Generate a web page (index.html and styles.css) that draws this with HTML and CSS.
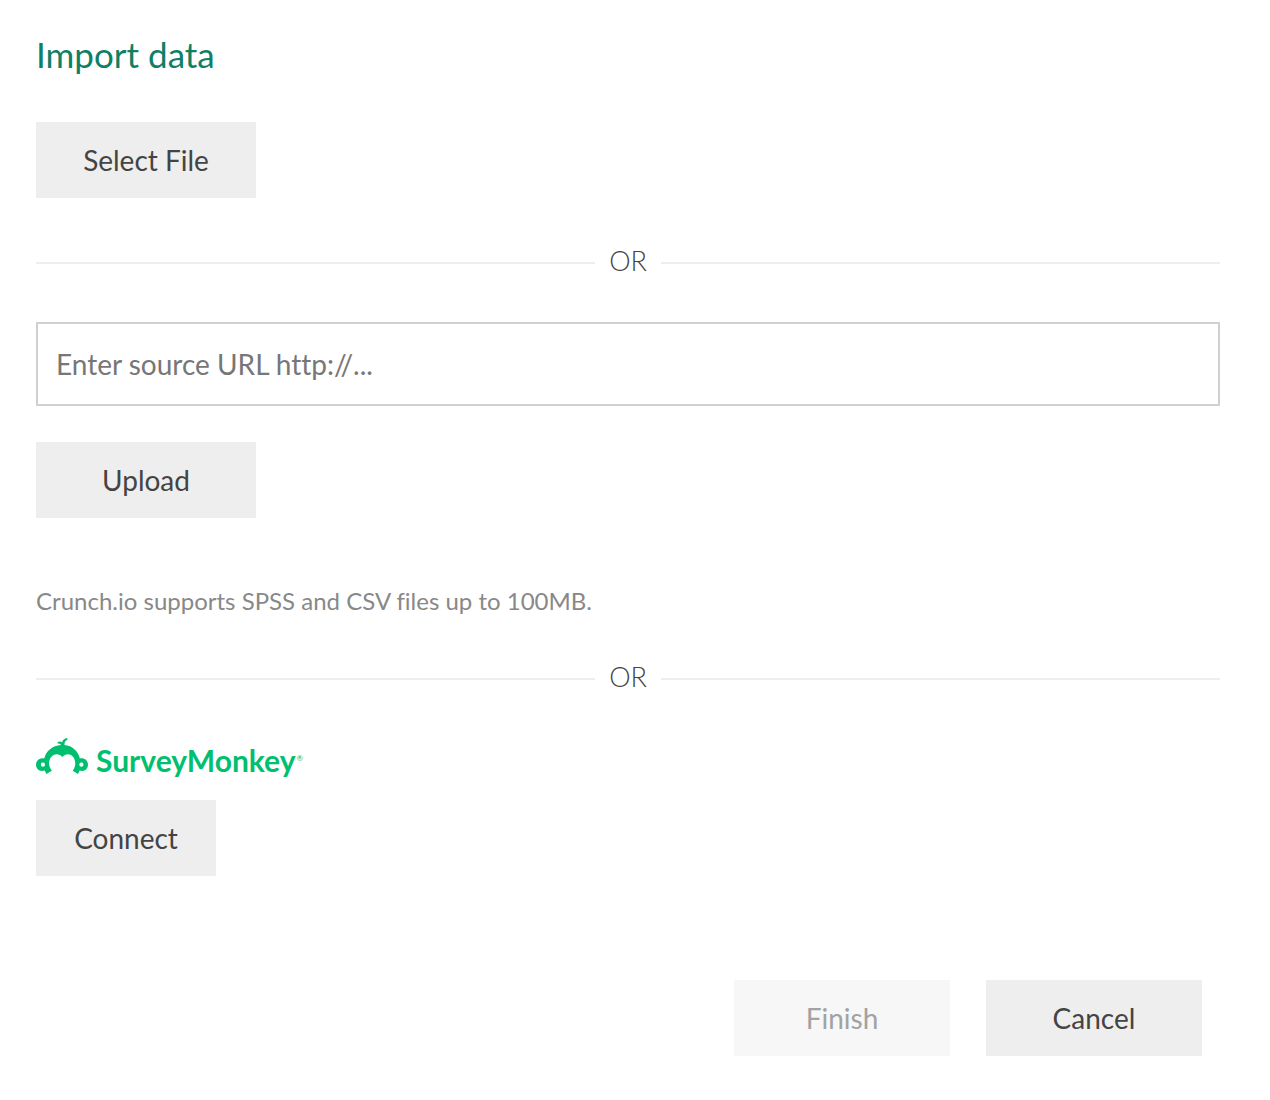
FILE: index.html
```html
<!DOCTYPE html>
<html lang="en">
<head>
<meta charset="utf-8">
<title>Import data</title>
<link rel="stylesheet" href="styles.css">
</head>
<body>
<main class="import">
  <h1 class="title">Import data</h1>
  <button class="button" type="button">Select File</button>
  <div class="divider">OR</div>
  <form class="url-form">
    <input class="url-input" type="text" aria-label="Source URL" placeholder="Enter source URL http://...">
    <button class="button" type="button">Upload</button>
  </form>
  <p class="hint">Crunch.io supports SPSS and CSV files up to 100MB.</p>
  <div class="divider">OR</div>
  <section class="service">
    <div class="brand">
      <svg class="brand-mark" viewBox="0 0 52 38" aria-hidden="true">
        <path fill="currentColor" fill-rule="evenodd" d="M25 7C24.500 5.800 23 5.400 21.200 5.300C21.400 3.500 24.600 2.600 26 4.600C26.500 2.200 28.500 .5 31 .1L31.700 1.500C29.200 2.600 28.400 4.400 28.500 7C36 7.700 42.200 13 43.900 20.500C48.600 19.600 52 22.700 52 26.800C52 31.300 48.200 34 43.600 32.500C43.200 33.600 42.700 34.500 42 35.900L36.700 32.800C38.800 29.800 39.400 27.400 39.200 24.500C38.600 16.300 31 13.600 26.300 18.900C21.600 13.600 14 16.300 13.100 24.500C12.800 27.400 13.700 29.800 15.800 32.800L10.400 35.900C9.700 34.500 9.100 33.600 8.700 32.500C4 34 0 31.300 0 26.800C0 22.700 3.700 19.600 8.300 20.500C9.900 13 16.500 7.600 25 7ZM6.900 24.600A2.100 2.100 0 1 0 6.900 28.800A2.100 2.100 0 1 0 6.900 24.600ZM45.400 24.600A2.100 2.100 0 1 0 45.400 28.800A2.100 2.100 0 1 0 45.400 24.600Z"/>
      </svg>
      <span class="brand-name">SurveyMonkey</span><span class="brand-reg">®</span>
    </div>
    <button class="button button-small" type="button">Connect</button>
  </section>
  <footer class="actions">
    <button class="button button-action" type="button" disabled>Finish</button>
    <button class="button button-action" type="button">Cancel</button>
  </footer>
</main>
</body>
</html>
```
FILE: styles.css
```css
* {
  box-sizing: border-box;
}

body {
  margin: 0;
  background: #fff;
  color: #444;
  font-family: Lato, "Open Sans", sans-serif;
  font-size: 28px;
  font-variant-ligatures: none;
  line-height: 36px;
}

.import {
  padding: 32px 50px 44px 36px;
}

.title {
  margin: 0 0 46px;
  color: #107f65;
  font-size: 35px;
  font-weight: 400;
  line-height: 44px;
}

.button {
  display: block;
  width: 220px;
  height: 76px;
  padding: 0;
  border: 0;
  background: #eee;
  color: #444;
  font: inherit;
}

.button:disabled {
  background: #f7f7f7;
  color: #a2a2a2;
}

.button-small {
  width: 180px;
}

.button-action {
  width: 216px;
}

.divider {
  display: flex;
  align-items: center;
  gap: 14px;
  margin: 45px 0 43px;
  font-size: 27px;
  font-weight: 300;
}

.divider::before,
.divider::after {
  content: "";
  flex: 1;
  height: 2px;
  margin-top: 4px;
  background: #eee;
}

.url-form {
  display: grid;
  gap: 36px;
}

.url-input {
  width: 100%;
  height: 84px;
  padding: 0 18px;
  border: 2px solid #d0d0d0;
  border-radius: 0;
  background: #fff;
  color: #444;
  font: inherit;
}

.url-input::placeholder {
  color: #777;
  opacity: 1;
}

.hint {
  margin: 70px 0 0;
  color: #888;
  font-size: 24px;
  line-height: 26px;
}

.service {
  display: grid;
  gap: 22px;
}

.brand {
  display: flex;
  height: 40px;
  color: #00bf6f;
}

.brand-mark {
  width: 52px;
  height: 38px;
  margin-right: 8px;
}

.brand-name {
  font-size: 30px;
  font-weight: 700;
  line-height: 44px;
}

.brand-reg {
  margin-left: 1px;
  font-size: 8px;
  line-height: 40px;
}

.actions {
  display: flex;
  justify-content: flex-end;
  gap: 36px;
  margin-top: 104px;
  padding-right: 18px;
}
```
